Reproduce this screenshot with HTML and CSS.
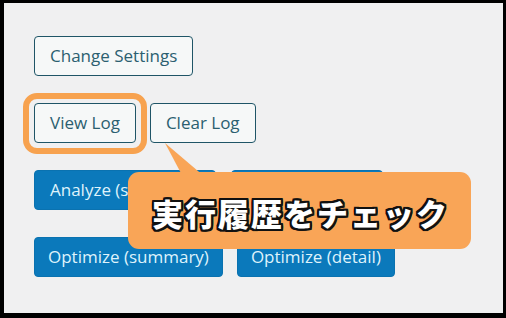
FILE: index.html
```html
<!DOCTYPE html>
<html lang="ja">
<head>
<meta charset="utf-8">
<link rel="stylesheet" href="styles.css">
</head>
<body>
<div class="frame">
  <div class="panel">
    <div class="row">
      <button class="btn secondary">Change Settings</button>
    </div>
    <div class="row gap14">
      <span class="hl-wrap">
        <button class="btn secondary">View Log</button>
        <span class="ring"></span>
      </span>
      <button class="btn secondary">Clear Log</button>
    </div>
    <div class="row gap15">
      <button class="btn primary">Analyze (summary)</button>
      <button class="btn primary">Analyze (detail)</button>
    </div>
    <div class="row gap14">
      <button class="btn primary narrow">Optimize (summary)</button>
      <button class="btn primary narrow">Optimize (detail)</button>
    </div>
    <svg class="tail" width="50" height="36" viewBox="0 0 50 36">
      <polygon points="6,2 24,36 46,36" fill="#f9a557"/>
    </svg>
    <div class="callout"><span class="callout-text">実行履歴をチェック</span></div>
  </div>
</div>
</body>
</html>
```

FILE: styles.css
```css
html, body {
  margin: 0;
  padding: 0;
}
body {
  width: 506px;
  height: 318px;
  overflow: hidden;
  background: #000;
}
.frame {
  box-sizing: border-box;
  width: 506px;
  height: 318px;
  border-style: solid;
  border-color: #000;
  border-width: 3px 3px 5px 4px;
  background: #f0f0f1;
}
.panel {
  position: relative;
  height: 100%;
  box-sizing: border-box;
  padding: 33px 0 0 30px;
  display: flex;
  flex-direction: column;
  gap: 27px;
}
.row {
  display: flex;
  align-items: center;
}
.gap14 { gap: 14px; }
.gap15 { gap: 15px; }
.btn {
  box-sizing: border-box;
  height: 40px;
  margin: 0;
  padding: 0 15px;
  border-radius: 4px;
  font-family: "Open Sans", "Noto Sans", sans-serif;
  font-size: 17px;
  line-height: 38px;
  white-space: nowrap;
}
.narrow {
  padding: 0 13px;
}
.secondary {
  background: #f6f8f8;
  color: #2b5f70;
  border: 1px solid #1f5567;
}
.primary {
  background: #0b79bb;
  color: #dff3fb;
  border: 1px solid #0a72b0;
}
.hl-wrap {
  position: relative;
  display: inline-flex;
}
.ring {
  position: absolute;
  top: -10px;
  left: -11px;
  right: -11px;
  bottom: -11px;
  border: 6px solid #f7a24f;
  border-radius: 14px;
}
.tail {
  position: absolute;
  left: 155px;
  top: 138px;
}
.callout {
  position: absolute;
  left: 124px;
  top: 169px;
  width: 343px;
  height: 77px;
  border-radius: 11px;
  background: #f9a557;
  display: flex;
  align-items: center;
  justify-content: center;
}
.callout-text {
  font-family: "Noto Sans CJK JP", sans-serif;
  font-weight: 900;
  font-size: 31px;
  letter-spacing: 2px;
  padding-left: 2px;
  color: #fff;
  margin-top: 3px;
  text-shadow:
    2px 0 0 #111, -2px 0 0 #111, 0 2px 0 #111, 0 -2px 0 #111,
    2px 2px 0 #111, -2px -2px 0 #111, 2px -2px 0 #111, -2px 2px 0 #111,
    1px 2px 0 #111, 2px 1px 0 #111, -1px 2px 0 #111, -2px 1px 0 #111,
    1px -2px 0 #111, 2px -1px 0 #111, -1px -2px 0 #111, -2px -1px 0 #111;
}
```
